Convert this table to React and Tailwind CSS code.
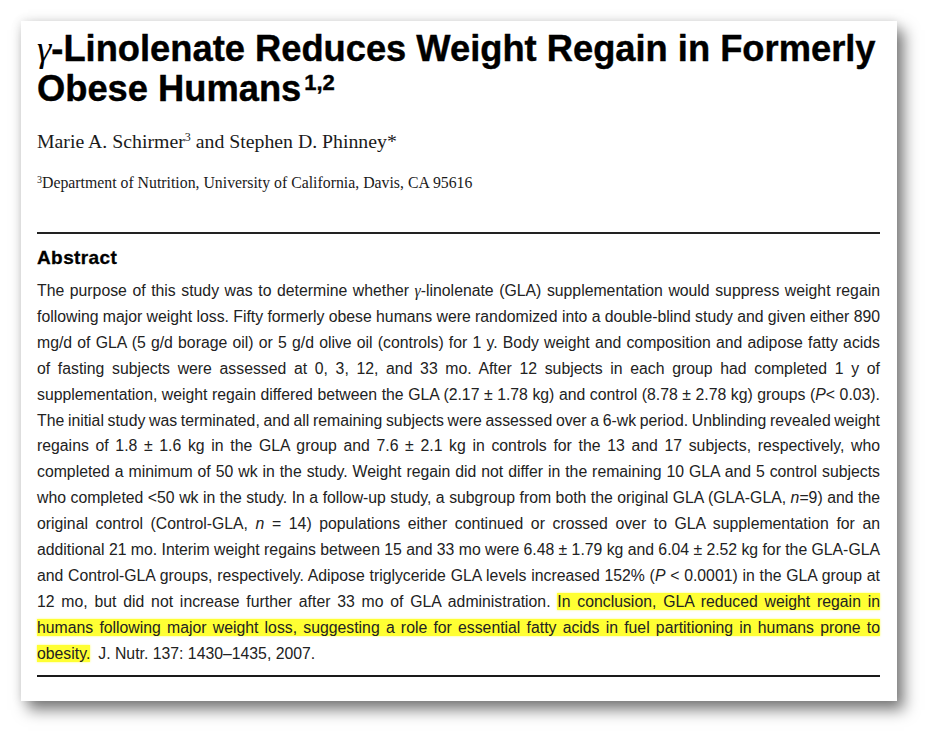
import React from "react";

// one justified line of the abstract (breaks are fixed, as in the printed page)
function Line({ children, last = false, tight = false }) {
    return (
        <div
            className={
                "whitespace-nowrap " +
                (last ? "text-left " : "text-justify [text-align-last:justify] ") +
                (tight ? "[word-spacing:-2px]" : "")
            }
        >
            {children}
        </div>
    );
}

const Gamma = () => (
    <span className="font-['Liberation_Serif',serif] italic">γ</span>
);

const Mark = ({ children }) => (
    <span className="bg-[#ffff33] shadow-[0_0_2px_#ffff66]">{children}</span>
);

export default function App() {
    return (
        <div className="min-h-screen bg-white pt-[21px] pl-[21px]">
            {/* PAGE CARD */}
            <div className="w-[876px] h-[680px] bg-white pt-[8px] pl-[16px] pr-[17px] shadow-[7px_9px_14px_rgba(0,0,0,0.5),0_0_10px_rgba(0,0,0,0.12)]">

                {/* TITLE */}
                <h1 className="whitespace-nowrap font-['Liberation_Sans',Arial,sans-serif] font-bold text-[36.3px] leading-[40px] text-black [-webkit-text-stroke:0.4px_black]">
                    <span className="font-['Liberation_Serif',serif] italic font-normal [-webkit-text-stroke:0px]">γ</span>
                    -Linolenate Reduces Weight Regain in Formerly
                    <br />
                    Obese Humans
                    <sup className="text-[22px] top-[-11px] ml-[3px]">1,2</sup>
                </h1>

                {/* AUTHORS */}
                <p className="mt-[20px] font-['Liberation_Serif',serif] text-[19.8px] leading-[24px] text-[#1a1a1a]">
                    Marie A. Schirmer<sup className="text-[12px] top-[-7px]">3</sup> and Stephen D. Phinney*
                </p>

                {/* AFFILIATION */}
                <p className="mt-[20px] font-['Liberation_Serif',serif] text-[15.8px] leading-[20px] text-[#1a1a1a]">
                    <sup className="text-[10px] top-[-5px]">3</sup>Department of Nutrition, University of California, Davis, CA 95616
                </p>

                <div className="mt-[39px] border-t-2 border-[#222]" />

                {/* ABSTRACT */}
                <h2 className="mt-[12px] font-['Liberation_Sans',Arial,sans-serif] font-bold text-[19px] leading-[24px] tracking-[0.4px] text-black [-webkit-text-stroke:0.3px_black]">
                    Abstract
                </h2>

                <div className="mt-[8px] font-['Liberation_Sans',Arial,sans-serif] text-[15.8px] leading-[25.9px] text-[#222]">
                    <Line>The purpose of this study was to determine whether <Gamma />-linolenate (GLA) supplementation would suppress weight regain</Line>
                    <Line tight>following major weight loss. Fifty formerly obese humans were randomized into a double-blind study and given either 890</Line>
                    <Line>mg/d of GLA (5 g/d borage oil) or 5 g/d olive oil (controls) for 1 y. Body weight and composition and adipose fatty acids</Line>
                    <Line>of fasting subjects were assessed at 0, 3, 12, and 33 mo. After 12 subjects in each group had completed 1 y of</Line>
                    <Line tight>supplementation, weight regain differed between the GLA (2.17 ± 1.78 kg) and control (8.78 ± 2.78 kg) groups (<i>P</i>&lt; 0.03).</Line>
                    <Line tight>The initial study was terminated, and all remaining subjects were assessed over a 6-wk period. Unblinding revealed weight</Line>
                    <Line>regains of 1.8 ± 1.6 kg in the GLA group and 7.6 ± 2.1 kg in controls for the 13 and 17 subjects, respectively, who</Line>
                    <Line tight>completed a minimum of 50 wk in the study. Weight regain did not differ in the remaining 10 GLA and 5 control subjects</Line>
                    <Line tight>who completed &lt;50 wk in the study. In a follow-up study, a subgroup from both the original GLA (GLA-GLA, <i>n</i>=9) and the</Line>
                    <Line>original control (Control-GLA, <i>n</i> = 14) populations either continued or crossed over to GLA supplementation for an</Line>
                    <Line tight>additional 21 mo. Interim weight regains between 15 and 33 mo were 6.48 ± 1.79 kg and 6.04 ± 2.52 kg for the GLA-GLA</Line>
                    <Line>and Control-GLA groups, respectively. Adipose triglyceride GLA levels increased 152% (<i>P</i> &lt; 0.0001) in the GLA group at</Line>
                    <Line>12 mo, but did not increase further after 33 mo of GLA administration. <Mark>In conclusion, GLA reduced weight regain in</Mark></Line>
                    <Line><Mark>humans following major weight loss, suggesting a role for essential fatty acids in fuel partitioning in humans prone to</Mark></Line>
                    <Line last>
                        <Mark>obesity.</Mark>
                        <span className="ml-[8px]">J. Nutr. 137: 1430–1435, 2007.</span>
                    </Line>
                </div>

                <div className="mt-[8px] border-t-2 border-[#1a1a1a]" />
            </div>
        </div>
    );
}
